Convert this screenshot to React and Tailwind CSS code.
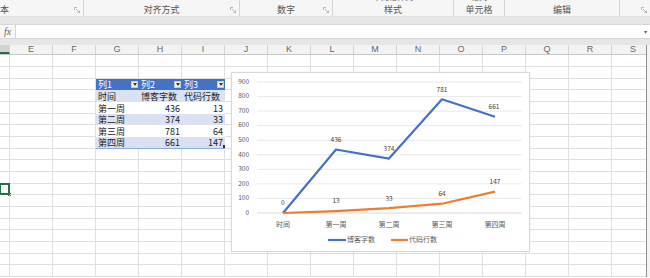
import React from "react";

const COLS = ["D", "E", "F", "G", "H", "I", "J", "K", "L", "M", "N", "O", "P", "Q", "R", "S"];
const colW = (i) => (i === 0 ? "w-[10px]" : "w-[43px]");
const ROW_H = ["h-[12px]", "h-[12px]", "h-[11px]"];
const ROWS = 19;

const GROUPS = [
  { w: "w-[84px]", label: "本", align: "justify-start", launcher: true },
  { w: "w-[156px]", label: "对齐方式", launcher: true },
  { w: "w-[93px]", label: "数字", launcher: true },
  { w: "w-[121px]", label: "样式", top: "单元格样式" },
  { w: "w-[51px]", label: "单元格", top: "格式" },
  { w: "w-[115px]", label: "编辑" },
  { w: "w-[30px]", label: "", launcher: true, last: true },
];

const TABLE = [
  ["时间", "博客字数", "代码行数"],
  ["第一周", "436", "13"],
  ["第二周", "374", "33"],
  ["第三周", "781", "64"],
  ["第四周", "661", "147"],
];

function Launcher() {
  return (
    <svg width="6" height="6" viewBox="0 0 6 6" className="absolute right-[3px] bottom-[3px]">
      <path d="M0.5 0.5H3M0.5 0.5V3M5.5 5.5L2 2M5.5 5.5H3.5M5.5 5.5V3.5" stroke="#a0a0a0" strokeWidth="0.7" fill="none" />
    </svg>
  );
}

function Ribbon() {
  return (
    <div className="flex h-[17px] bg-[#f6f6f6] border-b border-[#e0e0e0]">
      {GROUPS.map((g, i) => (
        <div
          key={i}
          className={`${g.w} relative flex flex-col items-center justify-end overflow-hidden pb-[1px] ${g.last ? "" : "border-r border-[#d4d4d4]"}`}
        >
          {g.top && <span className="text-[8px] leading-[10px] text-[#666] mb-[2px]">{g.top}</span>}
          <span className={`text-[9px] leading-[11px] text-[#555] ${g.align ? "self-start" : ""}`}>{g.label}</span>
          {g.launcher && <Launcher />}
        </div>
      ))}
    </div>
  );
}

function FormulaBar() {
  return (
    <div className="bg-[#e6e6e6] pt-[7px] pb-[6px]">
      <div className="flex h-[15px] bg-white border-y border-[#d6d6d6]">
        <div className="w-[16px] flex items-center justify-center bg-[#f7f7f7] border-r border-[#d6d6d6]">
          <span className="font-['Liberation_Serif',serif] italic text-[10px] leading-none text-[#666]">fx</span>
        </div>
        <div className="flex-1" />
        <div className="w-[6px] flex items-center text-[6px] text-[#666]">▾</div>
      </div>
    </div>
  );
}

function TableCell({ r, c }) {
  // r: 0 header, 1..5 data ; c: 0..2
  if (r === 0) {
    return (
      <div className="flex items-center h-full bg-[#4472c4] text-white pl-[2px] pr-[1px]">
        <span className="flex-1 text-[9px] leading-none">列{c + 1}</span>
        <span className="w-[7px] h-[7px] bg-[#f3f3f3] border border-[#c8c8c8] flex items-center justify-center">
          <svg width="4" height="3" viewBox="0 0 4 3">
            <path d="M0 0H4L2 3Z" fill="#333" />
          </svg>
        </span>
      </div>
    );
  }
  const v = TABLE[r - 1][c];
  const num = /^\d+$/.test(v);
  const band = r % 2 === 1;
  return (
    <div
      className={`relative flex items-center h-full px-[2px] text-[9px] leading-none text-[#222] ${num ? "justify-end" : "justify-start"} ${band ? "bg-[#d9e1f2]" : "bg-white"} ${r === 5 ? "border-b border-[#8ea9db]" : ""}`}
    >
      {v}
      {r === 5 && c === 2 && (
        <span className="absolute right-0 bottom-0 w-[2px] h-[3px] bg-[#333]" />
      )}
    </div>
  );
}

function Sheet() {
  return (
    <div className="flex-1 flex flex-col overflow-hidden">
      <div className="flex h-[12px] bg-[#f3f3f3] border-b border-[#c8c8c8]">
        {COLS.map((c, i) => (
          <div
            key={c}
            className={`${colW(i)} shrink-0 flex items-center justify-center border-r border-[#d4d4d4] text-[9px] leading-none text-[#666] font-['Liberation_Sans',sans-serif] ${i === 0 ? "bg-[#d3d3d3] border-b-2 border-b-[#217346]" : ""}`}
          >
            {i === 0 ? "" : c}
          </div>
        ))}
      </div>
      {Array.from({ length: ROWS }).map((_, r) => (
        <div key={r} className={`flex shrink-0 ${ROW_H[r % 3]}`}>
          {COLS.map((c, i) => {
            const inTable = r >= 2 && r <= 7 && i >= 3 && i <= 5;
            const selected = r === 11 && i === 0;
            return (
              <div
                key={c}
                className={`${colW(i)} shrink-0 relative ${inTable ? "" : "border-r border-b border-[#e0e0e0]"}`}
              >
                {inTable && <TableCell r={r - 2} c={i - 3} />}
                {selected && (
                  <>
                    <span className="absolute -left-[1px] -top-[1px] -right-[1px] -bottom-[1px] border-2 border-[#217346]" />
                    <span className="absolute -right-[2px] -bottom-[2px] w-[3px] h-[3px] bg-[#217346]" />
                  </>
                )}
              </div>
            );
          })}
        </div>
      ))}
    </div>
  );
}

const Y0 = 140;
const yOf = (v) => Y0 - (v * 131) / 900;
const XS = [51, 104, 157, 210, 263];
const BLUE = [0, 436, 374, 781, 661];
const ORANGE = [0, 13, 33, 64, 147];
const CATS = ["时间", "第一周", "第二周", "第三周", "第四周"];

function Chart() {
  const pts = (arr) => arr.map((v, i) => `${XS[i]},${yOf(v).toFixed(1)}`).join(" ");
  const blueLabels = [
    [50.7, 130.7, "0"],
    [104, 67.3, "436"],
    [157, 76.3, "374"],
    [210, 17.3, "781"],
    [262, 34.7, "661"],
  ];
  const orangeLabels = [
    [104, 128.7, "13"],
    [157, 126.3, "33"],
    [210, 121.3, "64"],
    [263, 109.7, "147"],
  ];
  return (
    <div className="absolute left-[231px] top-[72px] w-[299px] h-[180px] bg-white border border-[#d9d9d9] shadow-[0_0_2px_rgba(0,0,0,0.08)]">
      <svg width="299" height="180" viewBox="0 0 299 180" className="font-['Noto_Sans_CJK_SC',sans-serif]">
        {Array.from({ length: 10 }).map((_, i) => {
          const y = yOf(i * 100);
          return (
            <g key={i}>
              <line x1="25" x2="290" y1={y} y2={y} stroke={i === 0 ? "#cfcfcf" : "#e3e3e3"} strokeWidth="0.8" />
              <text x="17" y={y} textAnchor="end" dominantBaseline="middle" fontSize="6.5" fill="#595959">
                {i * 100}
              </text>
            </g>
          );
        })}
        {CATS.map((c, i) => (
          <text key={c} x={XS[i]} y="152" textAnchor="middle" dominantBaseline="middle" fontSize="7" fill="#595959">
            {c}
          </text>
        ))}
        <polyline points={pts(BLUE)} fill="none" stroke="#4472c4" strokeWidth="2.2" strokeLinejoin="round" />
        <polyline points={pts(ORANGE)} fill="none" stroke="#ed7d31" strokeWidth="2.2" strokeLinejoin="round" />
        {blueLabels.concat(orangeLabels).map(([x, y, t], i) => (
          <text key={i} x={x} y={y} textAnchor="middle" dominantBaseline="middle" fontSize="6.5" fill="#404040">
            {t}
          </text>
        ))}
        <line x1="96" x2="114" y1="167" y2="167" stroke="#4472c4" strokeWidth="2.2" />
        <text x="115" y="167" dominantBaseline="middle" fontSize="7" fill="#595959">博客字数</text>
        <line x1="159" x2="176" y1="167" y2="167" stroke="#ed7d31" strokeWidth="2.2" />
        <text x="177" y="167" dominantBaseline="middle" fontSize="7" fill="#595959">代码行数</text>
      </svg>
    </div>
  );
}

export default function App() {
  return (
    <div className="relative w-[650px] h-[278px] overflow-hidden bg-white font-['Noto_Sans_CJK_SC',sans-serif]">
      <Ribbon />
      <FormulaBar />
      <div className="flex h-[232px]">
        <Sheet />
        <div className="w-[4px] shrink-0 bg-[#f4f4f4] border-l border-[#8f8f8f]" />
      </div>
      <Chart />
    </div>
  );
}
